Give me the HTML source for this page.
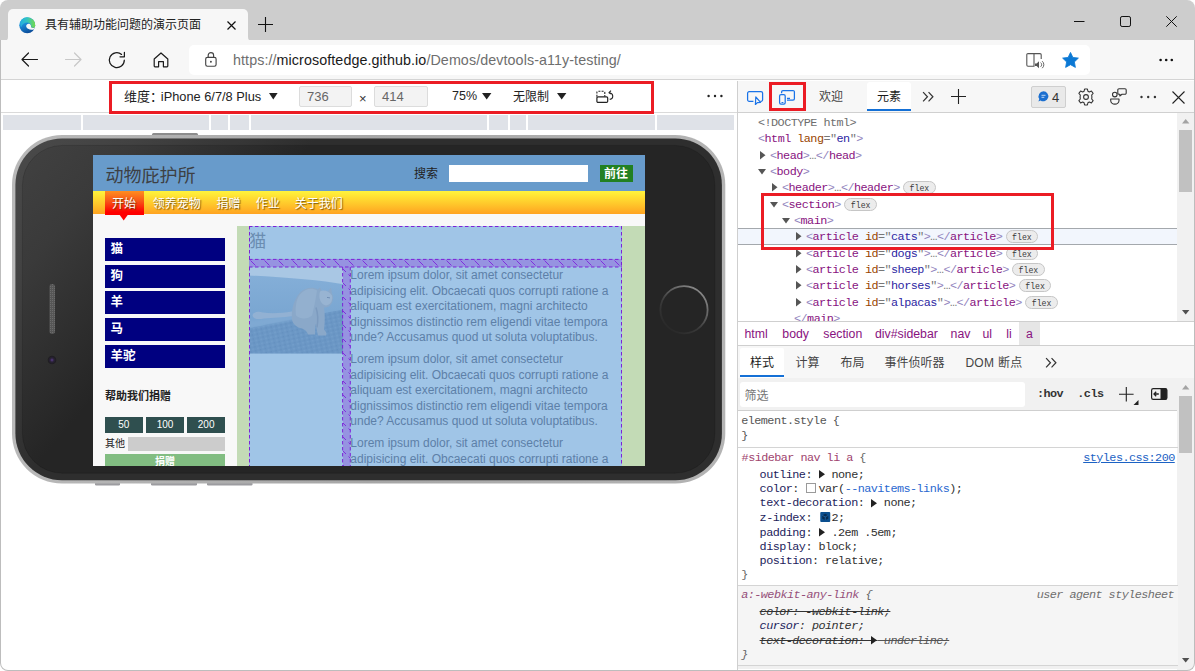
<!DOCTYPE html>
<html lang="zh-CN">
<head>
<meta charset="utf-8">
<title>具有辅助功能问题的演示页面</title>
<style>
*{box-sizing:border-box;margin:0;padding:0}
html,body{width:1195px;height:671px;overflow:hidden;background:#fff}
body{position:relative;font-family:"Liberation Sans","Noto Sans CJK SC",sans-serif;font-size:12px;color:#222}
.abs{position:absolute}
.t{position:absolute;white-space:nowrap;line-height:1}
.mono{font-family:"Liberation Mono","DejaVu Sans Mono",monospace;font-size:11.800px;letter-spacing:-.540px}
svg{position:absolute;overflow:visible}
/* browser chrome */
#win{left:0;top:0;width:1195px;height:670.500px;border-radius:8px;overflow:hidden;background:#fff}
#titlebar{left:0;top:0;width:1195px;height:40.500px;background:#cdcdcd}
#tab{left:8px;top:9px;width:240px;height:32px;background:#f7f7f7;border-radius:5px 5px 0 0}
#navbar{left:0;top:40px;width:1195px;height:40px;background:#f7f7f7;border-bottom:1px solid #d4d4d4}
#url{left:189px;top:45px;width:901px;height:30px;background:#fff;border-radius:5px}
/* device toolbar */
.inp{position:absolute;background:#f3f3f3;border:1px solid #dcdcdc;border-radius:2px;height:21px;top:86px;font-size:13px;color:#666;line-height:19px;padding-left:7px}
.redbox{position:absolute;border:3px solid #eb1c24}
.mq{position:absolute;top:114.600px;height:15.600px;background:#dfe2e8}

.nv{font-size:12px;color:#fff;text-shadow:1px 1px 1px rgba(80,50,0,.75)}
.sb{position:absolute;left:12px;width:120px;height:23px;background:#000080;color:#fff;font-weight:bold;font-size:12.500px;line-height:22.500px;padding-left:5.500px}
.dn{position:absolute;top:262px;height:15.600px;background:#2f4f4f;color:#fff;font-size:10px;line-height:15.500px;text-align:center}

.lp{position:absolute;left:257.300px;white-space:nowrap;font-size:12px;line-height:15.600px;color:#5d80a8}

.br{color:#9183bd}.tg{color:#881280}.an{color:#994500}.av{color:#2d1fa2}.gr{color:#777}
.pn{color:#1d1d5c}.pv{color:#303030}
.fb{position:absolute;width:32.500px;height:13.200px;margin-top:-.4px;border:1px solid #c6c6c6;background:#ececec;border-radius:6.500px;font-family:"Liberation Mono",monospace;font-size:8.200px;line-height:13.500px;text-align:center;color:#3a3a3a;letter-spacing:0}
</style>
</head>
<body>
<div id="win" class="abs">
<!-- ============ TITLE BAR ============ -->
<div id="titlebar" class="abs"></div>
<div id="tab" class="abs"></div>
<!-- tab curve feet -->
<svg style="left:0;top:36.500px" width="260" height="4"><path d="M4 4 A4 4 0 0 0 8 0 V4Z M248 0 A4 4 0 0 0 252 4 H248Z" fill="#f7f7f7"/></svg>
<!-- edge logo -->
<svg style="left:19px;top:17px" width="16.500" height="16.500" viewBox="0 0 17 17">
 <defs><linearGradient id="eg1" x1=".2" y1="0" x2=".6" y2="1"><stop offset="0" stop-color="#36bff0"/><stop offset=".45" stop-color="#1a86d2"/><stop offset="1" stop-color="#0b4a98"/></linearGradient>
 <linearGradient id="eg2" x1="0" y1="0" x2="1" y2="0"><stop offset="0" stop-color="#25aee0"/><stop offset=".45" stop-color="#33c4c0"/><stop offset="1" stop-color="#74da4a"/></linearGradient></defs>
 <circle cx="8.500" cy="8.500" r="8.200" fill="url(#eg1)"/>
 <path d="M2.200 3.400 A8.200 8.200 0 0 1 16.700 8.900 C16.600 10.200 15.900 11 14.900 11.200 C13.700 11.400 12.600 10.800 12.600 9.600 C12.600 7.400 10.800 5.600 8.300 5.600 C5.600 5.600 3 7.600 2.200 10.600 C1 8.400 1.100 5.400 2.200 3.400Z" fill="url(#eg2)"/>
 <path d="M7.400 9.400 C7.400 7.800 8.800 6.700 10.300 6.900 C11.700 7.100 12.500 8.300 12.400 9.600 C12.300 10.600 13 11.400 14.200 11.400 C15.200 11.400 16 10.900 16.500 10.200 C16.300 11.300 15.800 12.300 15 13 C13.200 13.500 10.800 13.200 9.300 12.200 C8.100 11.500 7.400 10.500 7.400 9.400Z" fill="#f7f7f7"/>
</svg>
<div class="t" style="left:45px;top:19px;font-size:12px;color:#222">具有辅助功能问题的演示页面</div>
<!-- tab close -->
<svg style="left:227px;top:21px" width="9" height="9"><path d="M.5 .5 L8.5 8.5 M8.5 .5 L.5 8.5" stroke="#111" stroke-width="1.2" fill="none"/></svg>
<!-- new tab plus -->
<svg style="left:258px;top:17px" width="15" height="15"><path d="M7.5 0 V15 M0 7.5 H15" stroke="#111" stroke-width="1.1" fill="none"/></svg>
<!-- window controls -->
<svg style="left:1074px;top:21px" width="11" height="2"><path d="M0 .5 H10.500" stroke="#111" stroke-width="1"/></svg>
<svg style="left:1120px;top:16px" width="11" height="11"><rect x=".5" y=".5" width="10" height="10" rx="1.6" fill="none" stroke="#111" stroke-width="1"/></svg>
<svg style="left:1166px;top:16px" width="11" height="11"><path d="M.3 .3 L10.7 10.7 M10.7 .3 L.3 10.7" stroke="#111" stroke-width="1" fill="none"/></svg>

<!-- ============ NAV BAR ============ -->
<div id="navbar" class="abs"></div>
<div id="url" class="abs"></div>
<!-- back -->
<svg style="left:21px;top:52px" width="17" height="15"><path d="M16.5 7.5 H1 M7.5 1 L1 7.5 L7.5 14" stroke="#1a1a1a" stroke-width="1.2" fill="none" stroke-linecap="round" stroke-linejoin="round"/></svg>
<!-- forward (disabled) -->
<svg style="left:65px;top:52px" width="17" height="15"><path d="M.5 7.5 H16 M9.5 1 L16 7.5 L9.5 14" stroke="#c8c8c8" stroke-width="1.2" fill="none" stroke-linecap="round" stroke-linejoin="round"/></svg>
<!-- refresh -->
<svg style="left:108px;top:51px" width="18" height="18" viewBox="0 0 18 18"><path d="M16.300 9.200 A7.500 7.500 0 1 1 13.600 3.400 M16.400 1.400 V5.800 H12" stroke="#1a1a1a" stroke-width="1.250" fill="none" stroke-linecap="round" stroke-linejoin="round"/></svg>
<!-- home -->
<svg style="left:153px;top:51.600px" width="16" height="16" viewBox="0 0 16 16"><path d="M1.2 7 L8 1 L14.8 7 V14 A.8 .8 0 0 1 14 14.8 H10.4 V9.6 H5.6 V14.8 H2 A.8 .8 0 0 1 1.2 14Z" stroke="#1a1a1a" stroke-width="1.2" fill="none" stroke-linejoin="round"/></svg>
<!-- lock -->
<svg style="left:205px;top:52px" width="12" height="15" viewBox="0 0 12 15"><rect x=".7" y="5.300" width="10.400" height="8.900" rx="1.700" fill="none" stroke="#444" stroke-width="1.150"/><path d="M3.200 5.300 V3.300 A2.700 2.700 0 0 1 8.600 3.300 V5.300" fill="none" stroke="#444" stroke-width="1.150"/><circle cx="5.900" cy="9.700" r=".95" fill="#444"/></svg>
<div class="t" style="left:233px;top:53px;font-size:14.3px;letter-spacing:.085px;color:#6e6e6e"><span>https://</span><span style="color:#1a1a1a">microsoftedge.github.io</span><span>/Demos/devtools-a11y-testing/</span></div>
<!-- read aloud -->
<svg style="left:1026px;top:52px" width="19" height="17" viewBox="0 0 19 17"><path d="M8 1.6 H2 A1.2 1.2 0 0 0 .8 2.8 V13 A1.2 1.2 0 0 0 2 14.2 H8 Z M8 1.6 H14 A1.2 1.2 0 0 1 15.2 2.8 V7" fill="none" stroke="#555" stroke-width="1.1"/><path d="M9 11.4 H10.6 L13 9.2 V16.2 L10.6 14 H9Z" fill="#555"/><path d="M14.6 10.6 A2.6 2.6 0 0 1 14.6 14.8 M16.2 9.2 A4.6 4.6 0 0 1 16.2 16.2" fill="none" stroke="#555" stroke-width=".9"/></svg>
<!-- star -->
<svg style="left:1062px;top:52px" width="17" height="16" viewBox="0 0 17 16"><path d="M8.5 .4 L10.9 5.4 L16.4 6.1 L12.4 9.9 L13.4 15.4 L8.5 12.7 L3.6 15.4 L4.6 9.9 L.6 6.1 L6.1 5.4Z" fill="#0b78d4" stroke="#0b78d4" stroke-width=".8" stroke-linejoin="round"/></svg>
<!-- menu dots -->
<svg style="left:1159px;top:58px" width="15" height="4"><circle cx="1.6" cy="2" r="1.3" fill="#111"/><circle cx="7.2" cy="2" r="1.3" fill="#111"/><circle cx="12.8" cy="2" r="1.3" fill="#111"/></svg>

<!-- ============ DEVICE TOOLBAR ============ -->
<div class="abs" style="left:0;top:112px;width:737px;height:1px;background:#dadada"></div>
<div class="t" style="left:124px;top:90px;font-size:13px;color:#222">维度：<span style="font-size:12.800px;margin-left:-2.200px">iPhone 6/7/8 Plus</span></div>
<svg style="left:269px;top:93px" width="10" height="7"><path d="M0 0 H8.600 L4.300 6.600Z" fill="#222"/></svg>
<div class="inp" style="left:299px;width:53px">736</div>
<div class="t" style="left:359px;top:92px;font-size:13px;color:#333">×</div>
<div class="inp" style="left:374px;width:54px">414</div>
<div class="t" style="left:452px;top:90px;font-size:12.500px;color:#222">75%</div>
<svg style="left:482px;top:93px" width="10" height="7"><path d="M0 0 H9.4 L4.7 6.6Z" fill="#222"/></svg>
<div class="t" style="left:513px;top:91px;font-size:12px;color:#222">无限制</div>
<svg style="left:557px;top:93px" width="10" height="7"><path d="M0 0 H9.4 L4.7 6.6Z" fill="#222"/></svg>
<!-- rotate icon -->
<svg style="left:595.800px;top:89.500px" width="18" height="14" viewBox="0 0 18 14"><path d="M.9 6.800 V2.400 A1.200 1.200 0 0 1 2.100 1.200 H7.600 A1.200 1.200 0 0 1 8.800 2.400 V6.800" fill="none" stroke="#222" stroke-width="1.100" stroke-dasharray="2 1.200"/><rect x=".9" y="6.800" width="10.800" height="5.600" rx="1.200" fill="#fff" stroke="#222" stroke-width="1.200"/><path d="M13.400 2.700 C17.600 3.200 18 8.600 13.700 9.400" fill="none" stroke="#222" stroke-width="1.100"/><path d="M15 .7 L13 2.700 L15.300 4.100" fill="none" stroke="#222" stroke-width="1.100" stroke-linejoin="round"/></svg>
<svg style="left:707px;top:94px" width="16" height="4"><circle cx="1.6" cy="2" r="1.200" fill="#222"/><circle cx="8" cy="2" r="1.200" fill="#222"/><circle cx="14.400" cy="2" r="1.200" fill="#222"/></svg>
<div class="redbox" style="left:109px;top:81px;width:545px;height:33px"></div>
<!-- media query bar -->
<div class="mq" style="left:3px;width:78px"></div>
<div class="mq" style="left:83px;width:126px"></div>
<div class="mq" style="left:211px;width:17px"></div>
<div class="mq" style="left:230px;width:19px"></div>
<div class="mq" style="left:251px;width:236px"></div>
<div class="mq" style="left:489px;width:18.500px"></div>
<div class="mq" style="left:509.500px;width:16.500px"></div>
<div class="mq" style="left:528px;width:126.500px"></div>
<div class="mq" style="left:656.500px;width:77.500px"></div>

<!-- ============ PHONE ============ -->
<svg style="left:0;top:130px" width="737" height="360" viewBox="0 130 737 360">
 <defs>
  <linearGradient id="pb" x1="0" y1="0" x2="1" y2="0"><stop offset="0" stop-color="#b9b9b9"/><stop offset=".5" stop-color="#a6a6a6"/><stop offset="1" stop-color="#b4b4b4"/></linearGradient>
  <linearGradient id="pf" gradientUnits="userSpaceOnUse" x1="15" y1="140" x2="188" y2="288"><stop offset="0" stop-color="#424242"/><stop offset=".4" stop-color="#3a3a3a"/><stop offset="1" stop-color="#252525"/></linearGradient>
  <linearGradient id="hb" gradientUnits="userSpaceOnUse" x1="700" y1="290" x2="668" y2="332"><stop offset="0" stop-color="#8a8a8a"/><stop offset=".6" stop-color="#3a3a3a"/><stop offset="1" stop-color="#262626"/></linearGradient>
  <pattern id="spk" width="2" height="2" patternUnits="userSpaceOnUse"><rect width="2" height="2" fill="#565656"/><rect width="1" height="1" fill="#6c6c6c"/></pattern>
  <radialGradient id="cam"><stop offset="0" stop-color="#5a3d8a"/><stop offset=".45" stop-color="#2a2238"/><stop offset="1" stop-color="#1c1c1c"/></radialGradient>
 </defs>
 <!-- side buttons -->
 <rect x="152" y="133" width="46" height="5" rx="1.5" fill="#8c8c8c"/>
 <rect x="95" y="480" width="25" height="5.500" rx="1.2" fill="#9c9ca0"/>
 <rect x="151" y="480" width="46" height="5.500" rx="1.2" fill="#9c9ca0"/>
 <rect x="207" y="480" width="45.500" height="5.500" rx="1.2" fill="#9c9ca0"/>
 <!-- body -->
 <rect x="12" y="135" width="713.300" height="348.600" rx="50" fill="url(#pb)"/>
 <rect x="15.400" y="138.400" width="706.500" height="341.800" rx="46.600" fill="url(#pf)"/>
 <rect x="18.900" y="141.900" width="699.500" height="334.800" rx="43.500" fill="none" stroke="#fff" stroke-opacity=".045" stroke-width="7"/>
 <rect x="22.400" y="145.400" width="692.500" height="327.800" rx="40" fill="none" stroke="#000" stroke-opacity=".13" stroke-width="1"/>
 <!-- speaker -->
 <rect x="49.500" y="284" width="5.500" height="50" rx="2.700" fill="url(#spk)"/>
 <!-- camera -->
 <circle cx="52" cy="360" r="4.300" fill="url(#cam)"/>
 <!-- home button -->
 <circle cx="684" cy="309.700" r="23.600" fill="none" stroke="url(#hb)" stroke-width="1.800"/>
</svg>
<div id="screen" class="abs" style="left:93px;top:155px;width:552px;height:311px;background:#f8f8f8;overflow:hidden">
 <div class="abs" style="left:0;top:0;width:552px;height:36px;background:#689bcb"></div>
 <div class="t" style="left:12.500px;top:11.500px;font-size:18px;color:#3d4044">动物庇护所</div>
 <div class="t" style="left:321px;top:13px;font-size:12px;color:#222">搜索</div>
 <div class="abs" style="left:356px;top:10px;width:139px;height:17px;background:#fff"></div>
 <div class="abs" style="left:507px;top:10px;width:33px;height:17px;background:#228022"></div>
 <div class="t" style="left:511px;top:12.500px;font-size:12px;font-weight:bold;color:#fff">前往</div>
 <!-- nav -->
 <div class="abs" style="left:0;top:36px;width:552px;height:23px;background:linear-gradient(#fff43c 0%,#ffd930 35%,#ffa321 100%)"></div>
 <div class="abs" style="left:12px;top:36px;width:39px;height:23.500px;background:linear-gradient(#ff8e20 0%,#f85518 42%,#ff0000 88%)"></div>
 <svg style="left:26px;top:59px" width="10" height="7"><path d="M0 0 H9.400 L4.700 6.600Z" fill="#ff0000"/></svg>
 <div class="t nv" style="left:19px;top:43px">开始</div>
 <div class="t nv" style="left:59.700px;top:43px">领养宠物</div>
 <div class="t nv" style="left:123.600px;top:43px">捐赠</div>
 <div class="t nv" style="left:162.800px;top:43px">作业</div>
 <div class="t nv" style="left:201.700px;top:43px">关于我们</div>
 <!-- sidebar -->
 <div class="sb" style="top:83px"><span>猫</span></div>
 <div class="sb" style="top:110px"><span>狗</span></div>
 <div class="sb" style="top:136.400px"><span>羊</span></div>
 <div class="sb" style="top:163.300px"><span>马</span></div>
 <div class="sb" style="top:190px"><span>羊驼</span></div>
 <div class="t" style="left:12px;top:236px;font-size:11px;font-weight:bold;color:#222">帮助我们捐赠</div>
 <div class="dn" style="left:12px;width:37.500px">50</div>
 <div class="dn" style="left:53px;width:38px">100</div>
 <div class="dn" style="left:94.300px;width:37.700px">200</div>
 <div class="t" style="left:12px;top:284.300px;font-size:10px;color:#222">其他</div>
 <div class="abs" style="left:35px;top:281.700px;width:97px;height:14px;background:#cccccc"></div>
 <div class="abs" style="left:12px;top:299.300px;width:120px;height:14px;background:#82bd82"></div>
 <div class="t" style="left:62px;top:302px;font-size:10px;font-weight:bold;color:#fff">捐赠</div>
 <!-- main -->
 <div class="abs" style="left:144px;top:71px;width:408px;height:240px;background:#c3dbb6"></div>
 <div class="abs" style="left:156px;top:71px;width:373px;height:240px;background:#a0c5e7"></div>
 <div class="t" style="left:156.300px;top:77.500px;font-size:17px;color:#6b8db1">猫</div>
 <!-- cat photo -->
 <svg style="left:156.500px;top:112.300px" width="93" height="86.400" viewBox="0 -.4 93 86.400">
  <defs>
   <linearGradient id="cbg" x1="0" y1="0" x2="0" y2="1"><stop offset="0" stop-color="#86b0d9"/><stop offset=".5" stop-color="#7ba7d2"/><stop offset="1" stop-color="#76a2ce"/></linearGradient>
   <filter id="bl" x="-20%" y="-20%" width="140%" height="140%"><feGaussianBlur stdDeviation=".7"/></filter>
   <filter id="bl2" x="-20%" y="-20%" width="140%" height="140%"><feGaussianBlur stdDeviation="1.2"/></filter>
   <pattern id="rug" width="5" height="4" patternUnits="userSpaceOnUse" patternTransform="rotate(-12)"><rect width="5" height="4" fill="#6b97c5"/><rect width="2" height="1.500" fill="#729dca"/><rect x="2.500" y="2" width="1.500" height="1.500" fill="#6490bf"/></pattern>
   <clipPath id="ccl"><rect width="93" height="86"/></clipPath>
  </defs>
  <g clip-path="url(#ccl)">
  <rect width="93" height="86" fill="url(#cbg)"/>
  <path d="M-2 -2 H95 V17 C70 13 40 10 -2 8Z" fill="#a9c7e4" filter="url(#bl)"/>
  <path d="M-2 61 C20 56 60 48 95 42 V88 H-2Z" fill="url(#rug)"/>
  <path d="M-2 54 C10 52 30 50 44 47 L45 52 C30 55 10 58 -2 61Z" fill="#7fa9d3" filter="url(#bl2)"/>
  <!-- cat -->
  <g filter="url(#bl)">
   <path d="M2.500 48 C3 44.500 8 43.500 13 45 C22 46.500 32 45.500 42 44 L43 48.500 C33 50 23 50.500 14 51 C8 52.500 3 51.500 2.500 48Z" fill="#92b1d3"/>
   <path d="M42 52 C41 42 44 32 50 25 C55 20 63 19 68 22 L70 20 L72 24 C74 23 77 23 78 24 L81 20 L82 26 C84 30 83 35 80 38 C78 40 75 40 74 40 C75 46 75 54 74 62 C76 64 77 66 76 68 L68 68 C67 64 66 60 66 56 C65 60 65 64 65 67 L58 67 C57 64 55 62 52 61 C47 60 43 57 42 52Z" fill="#8aa8c9"/>
   <path d="M50 27 C55 21 62 20 67 23 C66 30 64 40 62 48 C58 52 50 52 46 48 C45 40 46 32 50 27Z" fill="#93b0cf"/>
   <path d="M70 24 C74 22 79 24 82 28 C83 33 81 37 76 38 C71 37 68 31 70 24Z" fill="#98b4d2"/>
   <path d="M66 40 C68 46 68 54 67 60" stroke="#7b9abe" stroke-width="1.500" fill="none"/>
   <path d="M77 30 L80 30.500" stroke="#6f8eb4" stroke-width="1" fill="none"/>
  </g>
  </g>
 </svg>
 <!-- hatched gaps -->
 <svg style="left:156px;top:103.800px" width="373" height="207.700" viewBox="0 0 373 207.700">
  <defs>
   <pattern id="hat" width="14" height="14" patternUnits="userSpaceOnUse"><path d="M1.500 1.500 L6.500 6.500 M8.500 8.500 L13 13" stroke="#7f2fdc" stroke-width="1" fill="none"/></pattern>
  </defs>
  <rect x="0" y="0" width="373" height="8" fill="#9693e1"/>
  <rect x="0" y="0" width="373" height="8" fill="url(#hat)"/>
  <rect x="94" y="8" width="7.300" height="199" fill="#9693e1"/>
  <rect x="94" y="8" width="7.300" height="199" fill="url(#hat)"/>
  <g stroke="#7c22d8" stroke-width="1" fill="none" stroke-dasharray="3.500 2.500">
   <path d="M0 .4 H373 M0 8 H373"/>
   <path d="M93.600 8 V207 M101.300 8 V207 M.5 8 V207"/>
  </g>
 </svg>
 <!-- article outline -->
 <svg style="left:156px;top:71px" width="373" height="240" viewBox="0 0 373 240">
  <g stroke="#7c22d8" stroke-width="1" fill="none" stroke-dasharray="3.500 2.500">
   <path d="M.5 0 V34 M372.500 0 V240 M0 .5 H373"/>
  </g>
 </svg>
 <div class="lp" style="top:113px">Lorem ipsum dolor, sit amet consectetur<br>adipisicing elit. Obcaecati quos corrupti ratione a<br>aliquam est exercitationem, magni architecto<br>dignissimos distinctio rem eligendi vitae tempora<br>unde? Accusamus quod ut soluta voluptatibus.</div>
 <div class="lp" style="top:197px">Lorem ipsum dolor, sit amet consectetur<br>adipisicing elit. Obcaecati quos corrupti ratione a<br>aliquam est exercitationem, magni architecto<br>dignissimos distinctio rem eligendi vitae tempora<br>unde? Accusamus quod ut soluta voluptatibus.</div>
 <div class="lp" style="top:281px">Lorem ipsum dolor, sit amet consectetur<br>adipisicing elit. Obcaecati quos corrupti ratione a<br>aliquam est exercitationem, magni architecto</div>

</div>

<!--DT0-->
<!-- ============ DEVTOOLS ============ -->
<div class="abs" style="left:737px;top:81px;width:1px;height:590px;background:#cfcfcf"></div>
<div class="abs" style="left:738px;top:81px;width:456px;height:31.500px;background:#f7f7f7;border-bottom:1px solid #d0d0d0"></div>
<div class="abs" style="left:867px;top:82px;width:44px;height:29px;background:#fff;border-radius:3px 3px 0 0"></div>
<div class="abs" style="left:867px;top:109px;width:44px;height:2px;background:#1470d6"></div>
<div class="t" style="left:819px;top:91px;font-size:12px;color:#444">欢迎</div>
<div class="t" style="left:877px;top:91px;font-size:12px;color:#1a1a1a">元素</div>
<svg style="left:747px;top:91px" width="17" height="15" viewBox="0 0 17 15"><path d="M6.400 10.400 H2.200 A1.600 1.600 0 0 1 .6 8.800 V2.200 A1.600 1.600 0 0 1 2.200 .6 H14 A1.600 1.600 0 0 1 15.600 2.200 V8.800 A1.600 1.600 0 0 1 14 10.400 H13.400" fill="none" stroke="#1a73e8" stroke-width="1.250"/><path d="M8.800 6 L8.400 13.500 L10.400 11.600 L13.600 11.300Z" fill="#f7f7f7" stroke="#1a73e8" stroke-width="1.200" stroke-linejoin="round"/></svg>
<svg style="left:776px;top:89px" width="23" height="17" viewBox="0 0 23 17"><path d="M5.600 4.300 V2.900 A1.400 1.400 0 0 1 7 1.500 H17 A1.400 1.400 0 0 1 18.400 2.900 V9.800 A1.400 1.400 0 0 1 17 11.200 H11" fill="none" stroke="#1a73e8" stroke-width="1.250"/><rect x="3.600" y="5.700" width="5.600" height="9.400" rx="1.400" fill="#f7f7f7" stroke="#1a73e8" stroke-width="1.250"/><path d="M5.500 13.500 H7.400 M11 9.400 H14" stroke="#1a73e8" stroke-width="1.200"/></svg>
<div class="redbox" style="left:769px;top:82px;width:37px;height:29px"></div>
<svg style="left:921.500px;top:91px" width="12" height="11.500" viewBox="0 0 11 10"><path d="M1 .8 L5 5 L1 9.200 M6 .8 L10 5 L6 9.200" fill="none" stroke="#333" stroke-width="1.100"/></svg>
<svg style="left:951px;top:88.500px" width="15" height="15"><path d="M7.500 0 V15 M0 7.500 H15" stroke="#222" stroke-width="1.100" fill="none"/></svg>
<div class="abs" style="left:1031px;top:86px;width:35px;height:21.500px;background:#e9e9e9;border:1px solid #cfcfcf;border-radius:2px"></div>
<svg style="left:1038px;top:91px" width="11" height="11" viewBox="0 0 11 11"><path d="M5.500 .3 A5 5 0 1 1 2.500 9.400 L.4 10.400 L1.300 8 A5 5 0 0 1 5.500 .3Z" fill="#1b6fd0"/><path d="M3.500 4.300 H7.500 M3.500 6.300 H6.300" stroke="#cfe2f8" stroke-width=".9"/></svg>
<div class="t" style="left:1052px;top:90.500px;font-size:13px;color:#333">4</div>
<svg style="left:1077px;top:88px" width="18" height="18" viewBox="0 0 18 18"><path d="M7.600 1 H10.400 L10.900 3.200 L12.300 3.900 L14.400 3 L16.100 5.300 L14.700 7 L14.900 9 L14.700 11 L16.100 12.700 L14.400 15 L12.300 14.100 L10.900 14.800 L10.400 17 H7.600 L7.100 14.800 L5.700 14.100 L3.600 15 L1.900 12.700 L3.300 11 L3.100 9 L3.300 7 L1.900 5.300 L3.600 3 L5.700 3.900 L7.100 3.200Z" fill="none" stroke="#333" stroke-width="1.100" stroke-linejoin="round"/><circle cx="9" cy="9" r="2.400" fill="none" stroke="#333" stroke-width="1.100"/></svg>
<svg style="left:1110px;top:88px" width="17" height="17" viewBox="0 0 17 17"><circle cx="4.800" cy="6.600" r="2.300" fill="none" stroke="#333" stroke-width="1.100"/><path d="M.7 11 H9 V12.500 A4.100 3.600 0 0 1 .7 12.500Z" fill="none" stroke="#333" stroke-width="1.100" stroke-linejoin="round"/><path d="M9 .7 H15 A1.200 1.200 0 0 1 16.200 1.900 V5 A1.200 1.200 0 0 1 15 6.200 H12 L9.800 8 V6.200 H9 A1.200 1.200 0 0 1 7.800 5 V1.900 A1.200 1.200 0 0 1 9 .7Z" fill="none" stroke="#333" stroke-width="1.100" stroke-linejoin="round"/></svg>
<svg style="left:1140px;top:95px" width="17" height="4"><circle cx="1.500" cy="2" r="1.200" fill="#333"/><circle cx="8.200" cy="2" r="1.200" fill="#333"/><circle cx="14.900" cy="2" r="1.200" fill="#333"/></svg>
<svg style="left:1172px;top:91px" width="13" height="13"><path d="M.5 .5 L12.500 12.500 M12.500 .5 L.5 12.500" stroke="#222" stroke-width="1.100" fill="none"/></svg>
<div class="abs" style="left:738px;top:228px;width:439px;height:17px;background:#f2f6fd;border-top:1px solid #a4a8ad;border-bottom:1px solid #a4a8ad"></div>
<div class="t mono" style="left:758px;top:114.5px;line-height:16px"><span style="color:#6e6e6e">&lt;!DOCTYPE html&gt;</span></div>
<div class="t mono" style="left:758px;top:130.5px;line-height:16px"><span class="br">&lt;</span><span class="tg">html</span> <span class="an">lang</span><span class="gr">="</span><span class="av">en</span><span class="gr">"</span><span class="br">&gt;</span></div>
<svg style="left:760.2px;top:151.3px" width="6" height="9"><path d="M0 0 V8.400 L5.500 4.200Z" fill="#555"/></svg><div class="t mono" style="left:770px;top:147.5px;line-height:16px"><span class="br">&lt;</span><span class="tg">head</span><span class="br">&gt;</span><span class="gr">…</span><span class="br">&lt;/</span><span class="tg">head</span><span class="br">&gt;</span></div>
<svg style="left:758.0px;top:168.9px" width="9" height="6"><path d="M0 0 H8 L4 5.600Z" fill="#555"/></svg><div class="t mono" style="left:770px;top:163.5px;line-height:16px"><span class="br">&lt;</span><span class="tg">body</span><span class="br">&gt;</span></div>
<svg style="left:772.2px;top:183.3px" width="6" height="9"><path d="M0 0 V8.400 L5.500 4.200Z" fill="#555"/></svg><div class="t mono" style="left:782px;top:179.5px;line-height:16px"><span class="br">&lt;</span><span class="tg">header</span><span class="br">&gt;</span><span class="gr">…</span><span class="br">&lt;/</span><span class="tg">header</span><span class="br">&gt;</span></div><div class="fb" style="left:903.2px;top:181.2px">flex</div>
<svg style="left:770.0px;top:201.9px" width="9" height="6"><path d="M0 0 H8 L4 5.600Z" fill="#555"/></svg><div class="t mono" style="left:782px;top:196.5px;line-height:16px"><span class="br">&lt;</span><span class="tg">section</span><span class="br">&gt;</span></div><div class="fb" style="left:844.4px;top:198.2px">flex</div>
<svg style="left:782.0px;top:217.9px" width="9" height="6"><path d="M0 0 H8 L4 5.600Z" fill="#555"/></svg><div class="t mono" style="left:794px;top:212.5px;line-height:16px"><span class="br">&lt;</span><span class="tg">main</span><span class="br">&gt;</span></div>
<svg style="left:796.2px;top:232.3px" width="6" height="9"><path d="M0 0 V8.400 L5.500 4.200Z" fill="#555"/></svg><div class="t mono" style="left:806px;top:228.5px;line-height:16px"><span class="br">&lt;</span><span class="tg">article</span> <span class="an">id</span><span class="gr">="</span><span class="av">cats</span><span class="gr">"</span><span class="br">&gt;</span><span class="gr">…</span><span class="br">&lt;/</span><span class="tg">article</span><span class="br">&gt;</span></div><div class="fb" style="left:1005.7px;top:230.2px">flex</div>
<svg style="left:796.2px;top:249.3px" width="6" height="9"><path d="M0 0 V8.400 L5.500 4.200Z" fill="#555"/></svg><div class="t mono" style="left:806px;top:245.5px;line-height:16px"><span class="br">&lt;</span><span class="tg">article</span> <span class="an">id</span><span class="gr">="</span><span class="av">dogs</span><span class="gr">"</span><span class="br">&gt;</span><span class="gr">…</span><span class="br">&lt;/</span><span class="tg">article</span><span class="br">&gt;</span></div><div class="fb" style="left:1005.7px;top:247.2px">flex</div>
<svg style="left:796.2px;top:265.3px" width="6" height="9"><path d="M0 0 V8.400 L5.500 4.200Z" fill="#555"/></svg><div class="t mono" style="left:806px;top:261.5px;line-height:16px"><span class="br">&lt;</span><span class="tg">article</span> <span class="an">id</span><span class="gr">="</span><span class="av">sheep</span><span class="gr">"</span><span class="br">&gt;</span><span class="gr">…</span><span class="br">&lt;/</span><span class="tg">article</span><span class="br">&gt;</span></div><div class="fb" style="left:1012.2px;top:263.2px">flex</div>
<svg style="left:796.2px;top:281.3px" width="6" height="9"><path d="M0 0 V8.400 L5.500 4.200Z" fill="#555"/></svg><div class="t mono" style="left:806px;top:277.5px;line-height:16px"><span class="br">&lt;</span><span class="tg">article</span> <span class="an">id</span><span class="gr">="</span><span class="av">horses</span><span class="gr">"</span><span class="br">&gt;</span><span class="gr">…</span><span class="br">&lt;/</span><span class="tg">article</span><span class="br">&gt;</span></div><div class="fb" style="left:1018.8px;top:279.2px">flex</div>
<svg style="left:796.2px;top:298.3px" width="6" height="9"><path d="M0 0 V8.400 L5.500 4.200Z" fill="#555"/></svg><div class="t mono" style="left:806px;top:294.5px;line-height:16px"><span class="br">&lt;</span><span class="tg">article</span> <span class="an">id</span><span class="gr">="</span><span class="av">alpacas</span><span class="gr">"</span><span class="br">&gt;</span><span class="gr">…</span><span class="br">&lt;/</span><span class="tg">article</span><span class="br">&gt;</span></div><div class="fb" style="left:1025.3px;top:296.2px">flex</div>
<div class="t mono" style="left:794px;top:310.5px;line-height:16px"><span class="br">&lt;/</span><span class="tg">main</span><span class="br">&gt;</span></div>
<div class="redbox" style="left:761px;top:193px;width:293px;height:57px"></div>
<div class="abs" style="left:1177px;top:113px;width:17px;height:208px;background:#f1f1f1"></div>
<div class="abs" style="left:1179.200px;top:129.500px;width:12.500px;height:62px;background:#c1c1c1"></div>
<svg style="left:1181.500px;top:119px" width="8" height="5"><path d="M0 4.500 H7.400 L3.700 0Z" fill="#a3a3a3"/></svg>
<svg style="left:1181.500px;top:310px" width="8" height="5"><path d="M0 0 H7.400 L3.700 4.500Z" fill="#505050"/></svg>
<div class="abs" style="left:738px;top:321px;width:456px;height:350px;background:#fff;border-top:1px solid #cfcfcf"></div>
<div class="abs" style="left:1019px;top:322px;width:21px;height:23px;background:#e6e6e6"></div>
<div class="t" style="left:744.4px;top:327.500px;font-size:12.300px;color:#881280">html</div>
<div class="t" style="left:782.3px;top:327.500px;font-size:12.300px;color:#881280">body</div>
<div class="t" style="left:823.3px;top:327.500px;font-size:12.300px;color:#881280">section</div>
<div class="t" style="left:875px;top:327.500px;font-size:12.300px;color:#881280">div#sidebar</div>
<div class="t" style="left:950.6px;top:327.500px;font-size:12.300px;color:#881280">nav</div>
<div class="t" style="left:982.4px;top:327.500px;font-size:12.300px;color:#881280">ul</div>
<div class="t" style="left:1006.2px;top:327.500px;font-size:12.300px;color:#881280">li</div>
<div class="t" style="left:1026px;top:327.500px;font-size:12.300px;color:#881280">a</div>
<div class="abs" style="left:738px;top:345px;width:456px;height:1px;background:#cfcfcf"></div>
<div class="abs" style="left:738px;top:346px;width:456px;height:65px;background:#f1f1f1;border-bottom:1px solid #cfcfcf"></div>
<div class="abs" style="left:738px;top:346px;width:456px;height:32px;background:#f7f7f7"></div>
<div class="abs" style="left:740px;top:348px;width:44px;height:29.500px;background:#fff;border-radius:2px 2px 0 0"></div>
<div class="abs" style="left:740px;top:374.800px;width:44px;height:2px;background:#1470d6"></div>
<div class="t" style="left:750px;top:357px;font-size:12px;color:#1a1a1a">样式</div>
<div class="t" style="left:795.5px;top:357px;font-size:12px;color:#444">计算</div>
<div class="t" style="left:840.4px;top:357px;font-size:12px;color:#444">布局</div>
<div class="t" style="left:884.6px;top:357px;font-size:12px;color:#444">事件侦听器</div>
<div class="t" style="left:965.4px;top:357px;font-size:12px;color:#444;letter-spacing:.3px">DOM 断点</div>
<svg style="left:1045px;top:357px" width="12" height="11.500" viewBox="0 0 11 10"><path d="M1 .8 L5 5 L1 9.200 M6 .8 L10 5 L6 9.200" fill="none" stroke="#333" stroke-width="1.100"/></svg>
<div class="abs" style="left:740px;top:381.500px;width:284.700px;height:25.500px;background:#fff;border-radius:3px"></div>
<div class="t" style="left:744.400px;top:389.500px;font-size:12px;color:#757575">筛选</div>
<div class="t mono" style="left:1037px;top:388px;font-weight:bold;color:#333;line-height:13px">:hov</div>
<div class="t mono" style="left:1077.300px;top:388px;font-weight:bold;color:#333;line-height:13px">.cls</div>
<svg style="left:1119px;top:386.500px" width="22" height="20"><path d="M7.300 0 V14.500 M0 7.300 H14.600" stroke="#222" stroke-width="1.100" fill="none"/><path d="M19.500 13 V18 H14.500Z" fill="#222"/></svg>
<svg style="left:1151px;top:388px" width="17" height="12" viewBox="0 0 17 12"><rect x=".6" y=".6" width="15.300" height="10.800" rx="1.600" fill="none" stroke="#222" stroke-width="1.200"/><path d="M9.500 .6 H14.400 A1.500 1.500 0 0 1 15.900 2.100 V9.900 A1.500 1.500 0 0 1 14.400 11.400 H9.500Z" fill="#222"/><path d="M7.800 6 H3.200 M5.200 3.800 L3 6 L5.200 8.200" stroke="#222" stroke-width="1.300" fill="none"/></svg>
<div class="abs" style="left:1177px;top:378px;width:17px;height:293px;background:#f1f1f1"></div>
<div class="abs" style="left:1179.200px;top:395.700px;width:12.500px;height:57px;background:#c1c1c1"></div>
<svg style="left:1181.500px;top:385px" width="8" height="5"><path d="M0 4.500 H7.400 L3.700 0Z" fill="#a3a3a3"/></svg>
<svg style="left:1181.500px;top:658px" width="8" height="5"><path d="M0 0 H7.400 L3.700 4.500Z" fill="#505050"/></svg>
<div class="t mono" style="left:741.2px;top:413.8px;line-height:15px;"><span style="color:#555">element.style {</span></div>
<div class="t mono" style="left:741.2px;top:429.4px;line-height:15px;"><span style="color:#555">}</span></div>
<div class="abs" style="left:738px;top:447px;width:439.500px;height:1px;background:#d4d4d4"></div>
<div class="t mono" style="left:741.6px;top:450.7px;line-height:15px;"><span style="color:#a0446e">#sidebar nav li a</span><span style="color:#666"> {</span></div>
<div class="t mono" style="left:1083.200px;top:450.700px;line-height:15px;color:#1b62c4;text-decoration:underline">styles.css:200</div>
<div class="t mono" style="left:759.6px;top:467.8px;line-height:15px;"><span class="pn">outline</span><span class="pv">: &nbsp; none;</span></div>
<svg style="left:819.0px;top:470.2px" width="7" height="9"><path d="M0 0 V8.400 L6 4.200Z" fill="#222"/></svg>
<div class="t mono" style="left:759.6px;top:481.8px;line-height:15px;"><span class="pn">color</span><span class="pv">: &nbsp;&nbsp;var(<span style="color:#2a68d0">--navitems-links</span>);</span></div>
<div class="abs" style="left:806.2px;top:483.400px;width:10px;height:10px;background:#fff;border:1px solid #9a9a9a"></div>
<div class="t mono" style="left:759.6px;top:496.4px;line-height:15px;"><span class="pn">text-decoration</span><span class="pv">: &nbsp; none;</span></div>
<svg style="left:871.3px;top:498.8px" width="7" height="9"><path d="M0 0 V8.400 L6 4.200Z" fill="#222"/></svg>
<div class="t mono" style="left:759.6px;top:511.1px;line-height:15px;"><span class="pn">z-index</span><span class="pv">: &nbsp;&nbsp;2;</span></div>
<svg style="left:819.7px;top:512.200px" width="10.500" height="10" viewBox="0 0 11 11"><rect width="11" height="11" rx="1" fill="#0b4f8f"/><path d="M5.500 2 L8.800 3.700 V7.300 L5.500 9 L2.200 7.300 V3.700Z" fill="#062c52"/><path d="M2.200 3.700 L5.500 5.400 L8.800 3.700 M5.500 5.400 V9" stroke="#2d7fd0" stroke-width=".6" fill="none"/></svg>
<div class="t mono" style="left:759.6px;top:525.7px;line-height:15px;"><span class="pn">padding</span><span class="pv">: &nbsp; .2em .5em;</span></div>
<svg style="left:819.0px;top:528.1px" width="7" height="9"><path d="M0 0 V8.400 L6 4.200Z" fill="#222"/></svg>
<div class="t mono" style="left:759.6px;top:539.9px;line-height:15px;"><span class="pn">display</span><span class="pv">: block;</span></div>
<div class="t mono" style="left:759.6px;top:554.1px;line-height:15px;"><span class="pn">position</span><span class="pv">: relative;</span></div>
<div class="t mono" style="left:741.2px;top:568.1px;line-height:15px;"><span style="color:#666">}</span></div>
<div class="abs" style="left:738px;top:585px;width:439.500px;height:80.500px;background:#f5f5f5;border-top:1px solid #d4d4d4;border-bottom:1px solid #d4d4d4"></div>
<div class="abs" style="left:738px;top:666px;width:439.500px;height:3px;background:#f0f0f0"></div>
<div class="t mono" style="left:741.2px;top:588.4px;line-height:15px;font-style:italic"><span style="color:#96507a">a:-webkit-any-link</span><span style="color:#666"> {</span></div>
<div class="t mono" style="left:1036.700px;top:588.300px;line-height:15px;color:#6e6e6e;font-style:italic">user agent stylesheet</div>
<div class="t mono" style="left:759.6px;top:605.0px;line-height:15px;font-style:italic"><span style="color:#333;text-decoration:line-through">color: -webkit-link;</span></div>
<div class="t mono" style="left:759.6px;top:619.0px;line-height:15px;font-style:italic"><span class="pn">cursor</span><span class="pv">: pointer;</span></div>
<div class="t mono" style="left:759.6px;top:633.7px;line-height:15px;font-style:italic"><span style="color:#333;text-decoration:line-through">text-decoration: &nbsp;</span><span style="color:#555;text-decoration:line-through"> underline;</span></div>
<svg style="left:871.3px;top:636.4px" width="7" height="9"><path d="M0 0 V8.400 L6 4.200Z" fill="#222"/></svg>
<div class="t mono" style="left:741.2px;top:647.8px;line-height:15px;font-style:italic"><span style="color:#666">}</span></div>
<!--DT1-->
</div>
<!-- window borders -->
<div class="abs" style="left:0;top:40px;width:1195px;height:630.500px;border:1px solid #bdbdbd;border-top:none;border-radius:0 0 8px 8px"></div>
</body>
</html>
